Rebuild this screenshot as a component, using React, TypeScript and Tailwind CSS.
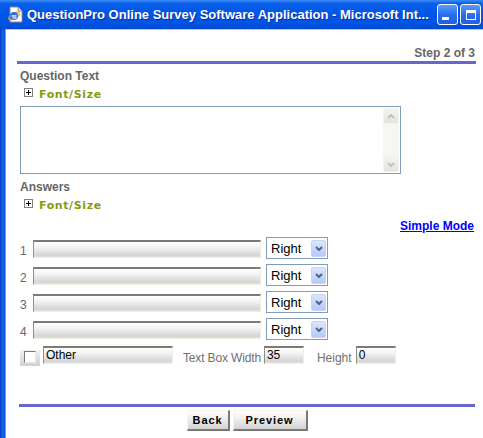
import React from "react";

const SANS = "font-['Liberation_Sans',Arial,sans-serif]";
const VERD = "font-['DejaVu_Sans',Verdana,sans-serif]";

function XPInput({ className, value }: { className: string; value?: string }) {
  return (
    <div
      className={`${className} h-[18px] border-t-2 border-l border-r border-b border-t-[#7b7b73] border-l-[#8f8f87] border-r-[#f1efe2] border-b-[#f1efe2] bg-[linear-gradient(to_bottom,#ffffff_0%,#f3f3f3_35%,#d4d4d4_88%,#e4e4e4_100%)] pl-[2px] text-[12px] leading-[14px] text-black ${SANS}`}
    >
      {value}
    </div>
  );
}

function Chevron({ up, color }: { up?: boolean; color: string }) {
  return (
    <svg width="8" height="5" viewBox="0 0 8 5">
      <polyline
        points={up ? "1,4 4,1 7,4" : "1,1 4,4 7,1"}
        fill="none"
        stroke={color}
        strokeWidth="2"
      />
    </svg>
  );
}

function PlusBox() {
  return (
    <div className="w-[9px] h-[9px] border border-[#808080] bg-white flex items-center justify-center">
      <svg width="7" height="7" viewBox="0 0 7 7">
        <line x1="1" y1="3.5" x2="6" y2="3.5" stroke="#000" strokeWidth="1" />
        <line x1="3.5" y1="1" x2="3.5" y2="6" stroke="#000" strokeWidth="1" />
      </svg>
    </div>
  );
}

function FontSize({ mt }: { mt: string }) {
  return (
    <div className={`flex items-start h-[14px] ml-[18px] ${mt}`}>
      <PlusBox />
      <span className={`ml-[6px] text-[11px] leading-[14px] font-bold tracking-[0.6px] text-[#859b0a] ${VERD}`}>
        Font/Size
      </span>
    </div>
  );
}

function AnswerRow({ n, mt }: { n: number; mt: string }) {
  return (
    <div className={`flex items-start h-[22px] ml-[14px] ${mt}`}>
      <span className={`w-[13px] mt-[7px] text-[12px] leading-[14px] text-[#666666] ${SANS}`}>{n}</span>
      <XPInput className="w-[228px] mt-[3px]" />
      <div className="ml-[5px] w-[62px] h-[22px] border border-[#7f9db9] bg-white flex items-center justify-between pl-[4px] pr-[1px]">
        <span className={`pt-[1px] text-[13px] leading-[15px] text-black ${SANS}`}>Right</span>
        <div className="w-[15px] h-[17px] rounded-[2px] bg-[linear-gradient(to_bottom,#dbe6fd,#b5c9f7)] border border-[#c4d4f8] flex items-center justify-center">
          <Chevron color="#4d6185" />
        </div>
      </div>
    </div>
  );
}

function XPButton({ label, w }: { label: string; w: string }) {
  return (
    <div
      className={`${w} h-[21px] border border-t-[#f4f4ee] border-l-[#f4f4ee] border-r-[#7a7a72] border-b-[#7a7a72] border-r-2 border-b-2 bg-[linear-gradient(to_bottom,#ffffff,#f0f0f0_40%,#d2d2d2)] flex items-center justify-center text-[11px] leading-[13px] font-bold tracking-[0.9px] text-black ${SANS}`}
    >
      {label}
    </div>
  );
}

export default function App() {
  return (
    <div className="w-[483px] h-[438px] overflow-hidden bg-white flex flex-col">
      {/* Title bar */}
      <div className="h-[29px] shrink-0 flex items-center bg-[linear-gradient(to_bottom,#3d8cf7_0%,#0a5fea_12%,#0057e6_45%,#0054e3_80%,#0048d4_100%)]">
        <div className="ml-[7px] w-[17px] h-[17px]">
          <svg width="17" height="17" viewBox="0 0 17 17">
            <path d="M3 1 H11 L15 5 V16 H3 Z" fill="#ffffff" stroke="#8a8a8a" strokeWidth="1" />
            <path d="M11 1 V5 H15" fill="#e0e0e0" stroke="#8a8a8a" strokeWidth="1" />
            <ellipse cx="7" cy="10" rx="6" ry="2.5" fill="none" stroke="#f0a020" strokeWidth="1.2" transform="rotate(-30 7 10)" />
            <circle cx="7" cy="10" r="4" fill="#2a6ee8" />
            <rect x="4.5" y="9.3" width="5" height="1.3" fill="#ffffff" />
            <rect x="5.5" y="11.4" width="4" height="1.2" fill="#ffffff" />
          </svg>
        </div>
        <span className={`ml-[3px] text-[13px] leading-[16px] font-bold text-white whitespace-nowrap [text-shadow:1px_1px_0_#0b2c9c] ${SANS}`}>
          QuestionPro Online Survey Software Application - Microsoft Int...
        </span>
        <div className="ml-auto flex items-center gap-[2px] mr-[2px]">
          <div className="w-[21px] h-[21px] rounded-[3px] border border-white bg-[linear-gradient(to_bottom,#5c9cff,#2a6ff0_50%,#1f5fe4)] relative">
            <div className="absolute left-[4px] top-[12px] w-[7px] h-[3px] bg-white" />
          </div>
          <div className="w-[21px] h-[21px] rounded-[3px] border border-white bg-[linear-gradient(to_bottom,#5c9cff,#2a6ff0_50%,#1f5fe4)] flex items-center justify-center">
            <div className="w-[10px] h-[10px] border border-white border-t-[3px]" />
          </div>
        </div>
      </div>

      {/* Body */}
      <div className="flex-1 flex">
        <div className="w-[5px] bg-[linear-gradient(to_right,#0838c8,#1564ec_55%,#0a50dd)]" />
        <div className="w-[1px] bg-[#9a9a9a]" />
        <div className="flex-1 flex flex-col border-t border-[#c8c8c8] pt-[16px]">
          <div className={`h-[14px] text-right pr-[8px] text-[12px] leading-[14px] font-bold text-[#666666] ${SANS}`}>
            Step 2 of 3
          </div>
          <div className="mt-[1px] h-[3px] ml-[11px] mr-[7px] bg-[#6666cc]" />

          <div className={`mt-[5px] ml-[14px] h-[14px] text-[12px] leading-[14px] font-bold text-[#666666] ${SANS}`}>
            Question Text
          </div>
          <FontSize mt="mt-[5px]" />

          <div className="mt-[4px] ml-[14px] w-[381px] h-[68px] border border-[#7f9db9] bg-white flex justify-end py-[1px] pr-[1px]">
            <div className="w-[16px] h-full flex flex-col bg-[#fbfbf8]">
              <div className="w-[16px] h-[16px] rounded-[2px] border border-[#f4f4ee] bg-[linear-gradient(to_bottom,#f4f4f0,#e4e4dc)] flex items-center justify-center">
                <Chevron up color="#c3c3bb" />
              </div>
              <div className="flex-1 bg-[radial-gradient(#ecece6_0.5px,transparent_0.8px)] bg-[length:2px_2px]" />
              <div className="w-[16px] h-[16px] rounded-[2px] border border-[#f4f4ee] bg-[linear-gradient(to_bottom,#f4f4f0,#e4e4dc)] flex items-center justify-center">
                <Chevron color="#c3c3bb" />
              </div>
            </div>
          </div>

          <div className={`mt-[6px] ml-[14px] h-[14px] text-[12px] leading-[14px] font-bold text-[#666666] ${SANS}`}>
            Answers
          </div>
          <FontSize mt="mt-[5px]" />

          <div className={`mt-[6px] h-[14px] text-right pr-[9px] text-[12px] leading-[14px] font-bold ${SANS}`}>
            <span className="text-[#0000ff] underline">Simple Mode</span>
          </div>

          <AnswerRow n={1} mt="mt-[4px]" />
          <AnswerRow n={2} mt="mt-[5px]" />
          <AnswerRow n={3} mt="mt-[5px]" />
          <AnswerRow n={4} mt="mt-[5px]" />

          <div className="mt-[6px] ml-[14px] h-[19px] flex items-start">
            <div className="mt-[4px] w-[20px] h-[16px] bg-[linear-gradient(to_bottom,#f2f2f2,#d0d0d0)] flex items-start justify-center pt-[1px]">
              <div className="w-[12px] h-[12px] bg-white border border-t-[#7a7a7a] border-l-[#7a7a7a] border-r-[#e6e6e6] border-b-[#e6e6e6]" />
            </div>
            <XPInput className="w-[130px] ml-[3px]" value="Other" />
            <span className={`ml-[10px] mt-[5px] text-[12px] leading-[14px] tracking-[-0.15px] text-[#6f6f6f] ${SANS}`}>
              Text Box Width
            </span>
            <XPInput className="w-[40px] ml-[3px]" value="35" />
            <span className={`ml-[13px] mt-[5px] text-[12px] leading-[14px] text-[#6f6f6f] ${SANS}`}>Height</span>
            <XPInput className="w-[40px] ml-[4px]" value="0" />
          </div>

          <div className="mt-[39px] h-[3px] ml-[13px] mr-[8px] bg-[#6666cc]" />
          <div className="mt-[3px] ml-[13px] mr-[8px] flex justify-center gap-[3px]">
            <XPButton label="Back" w="w-[43px]" />
            <XPButton label="Preview" w="w-[75px]" />
          </div>
        </div>
      </div>
    </div>
  );
}
